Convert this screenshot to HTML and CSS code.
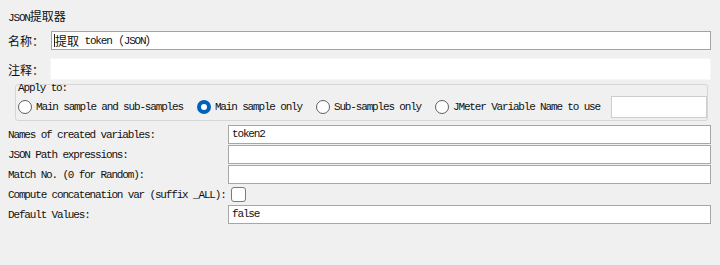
FILE: index.html
```html
<!DOCTYPE html>
<html lang="zh">
<head>
  <meta charset="UTF-8" />
  <title>JSON提取器</title>
  <link rel="stylesheet" href="styles.css">
</head>
<body>
  <div class="panel">
    <div class="title">JSON<span class="cjk">提取器</span></div>

    <div class="row name-row">
      <label class="cjk head-label">名称：</label>
      <div class="box-input boxed"><span class="caret"></span><span class="cjk">提取</span> token<span class="cjk">（</span>JSON<span class="cjk">）</span></div>
    </div>

    <div class="row comment-row">
      <label class="cjk head-label">注释：</label>
      <div class="box-input plain"></div>
    </div>

    <div class="apply">
      <div class="legend">Apply to:</div>
      <div class="radios">
        <span class="radio"></span><span class="opt">Main sample and sub-samples</span>
        <span class="radio checked"></span><span class="opt">Main sample only</span>
        <span class="radio"></span><span class="opt">Sub-samples only</span>
        <span class="radio"></span><span class="opt">JMeter Variable Name to use</span>
        <div class="var-input"></div>
      </div>
    </div>

    <div class="fields">
      <label>Names of created variables:</label>
      <div class="field">token2</div>

      <label>JSON Path expressions:</label>
      <div class="field"></div>

      <label>Match No. (0 for Random):</label>
      <div class="field"></div>

      <label class="wide">Compute concatenation var (suffix _ALL):</label>
      <div class="check-cell"><span class="checkbox"></span></div>

      <label>Default Values:</label>
      <div class="field">false</div>
    </div>
  </div>
</body>
</html>
```

FILE: styles.css
```css
body {
  margin: 0;
  background: #f0f0f0;
  color: #111;
  font-family: "Liberation Mono", monospace;
  font-size: 11px;
  letter-spacing: -1.16px;
}

.cjk {
  font-family: "Noto Sans CJK SC", sans-serif;
  font-size: 12px;
  letter-spacing: 0;
}

.panel {
  padding: 5px 9px 0 8px;
}

.title {
  height: 22px;
  line-height: 22px;
}

.row {
  display: flex;
  align-items: center;
}

.head-label {
  width: 42px;
  flex: none;
}

.name-row {
  margin-top: 4px;
  height: 19px;
}

.comment-row {
  margin-top: 8px;
  height: 22px;
}

.box-input {
  flex: 1;
  height: 100%;
  box-sizing: border-box;
  background: #fff;
  display: flex;
  align-items: center;
  padding-left: 2px;
  white-space: pre;
}

.boxed {
  border: 1px solid #a3a3a3;
  margin-left: 1px;
}

.plain {
  border: 1px solid #f6f6f6;
}

.caret {
  width: 1px;
  height: 13px;
  background: #222;
  margin-right: 0;
}

.apply {
  margin: 4px 3px 0 7px;
  border: 1px solid #d6d6d6;
  border-radius: 3px;
  padding-bottom: 1px;
}

.legend {
  height: 10px;
  line-height: 6px;
  padding-left: 2px;
}

.radios {
  height: 24px;
  display: flex;
  align-items: center;
  padding-left: 2px;
}

.radio {
  width: 14px;
  height: 14px;
  box-sizing: border-box;
  border: 1px solid #5f5f5f;
  border-radius: 50%;
  background: #fff;
  margin-right: 4px;
  flex: none;
}

.radio.checked {
  border: 4px solid #0062b8;
  background: #fff;
}

.opt {
  margin-right: 14px;
  white-space: pre;
}

.var-input {
  margin-left: -3px;
  width: 97px;
  height: 22px;
  box-sizing: border-box;
  background: #fff;
  border: 1px solid #cdcdcd;
}

.fields {
  margin-top: 4px;
  display: grid;
  grid-template-columns: 220px 483px;
  grid-auto-rows: 19px;
  row-gap: 1px;
  align-items: center;
}

.fields label {
  white-space: pre;
}

.field {
  height: 19px;
  box-sizing: border-box;
  background: #fff;
  border: 1px solid #a6a6a6;
  padding-left: 3px;
  line-height: 17px;
}

.check-cell {
  display: flex;
  align-items: center;
  height: 19px;
}

.checkbox {
  margin-left: 3px;
  width: 15px;
  height: 15px;
  box-sizing: border-box;
  border: 1px solid #7a7a7a;
  border-radius: 3px;
  background: #fff;
}
```
